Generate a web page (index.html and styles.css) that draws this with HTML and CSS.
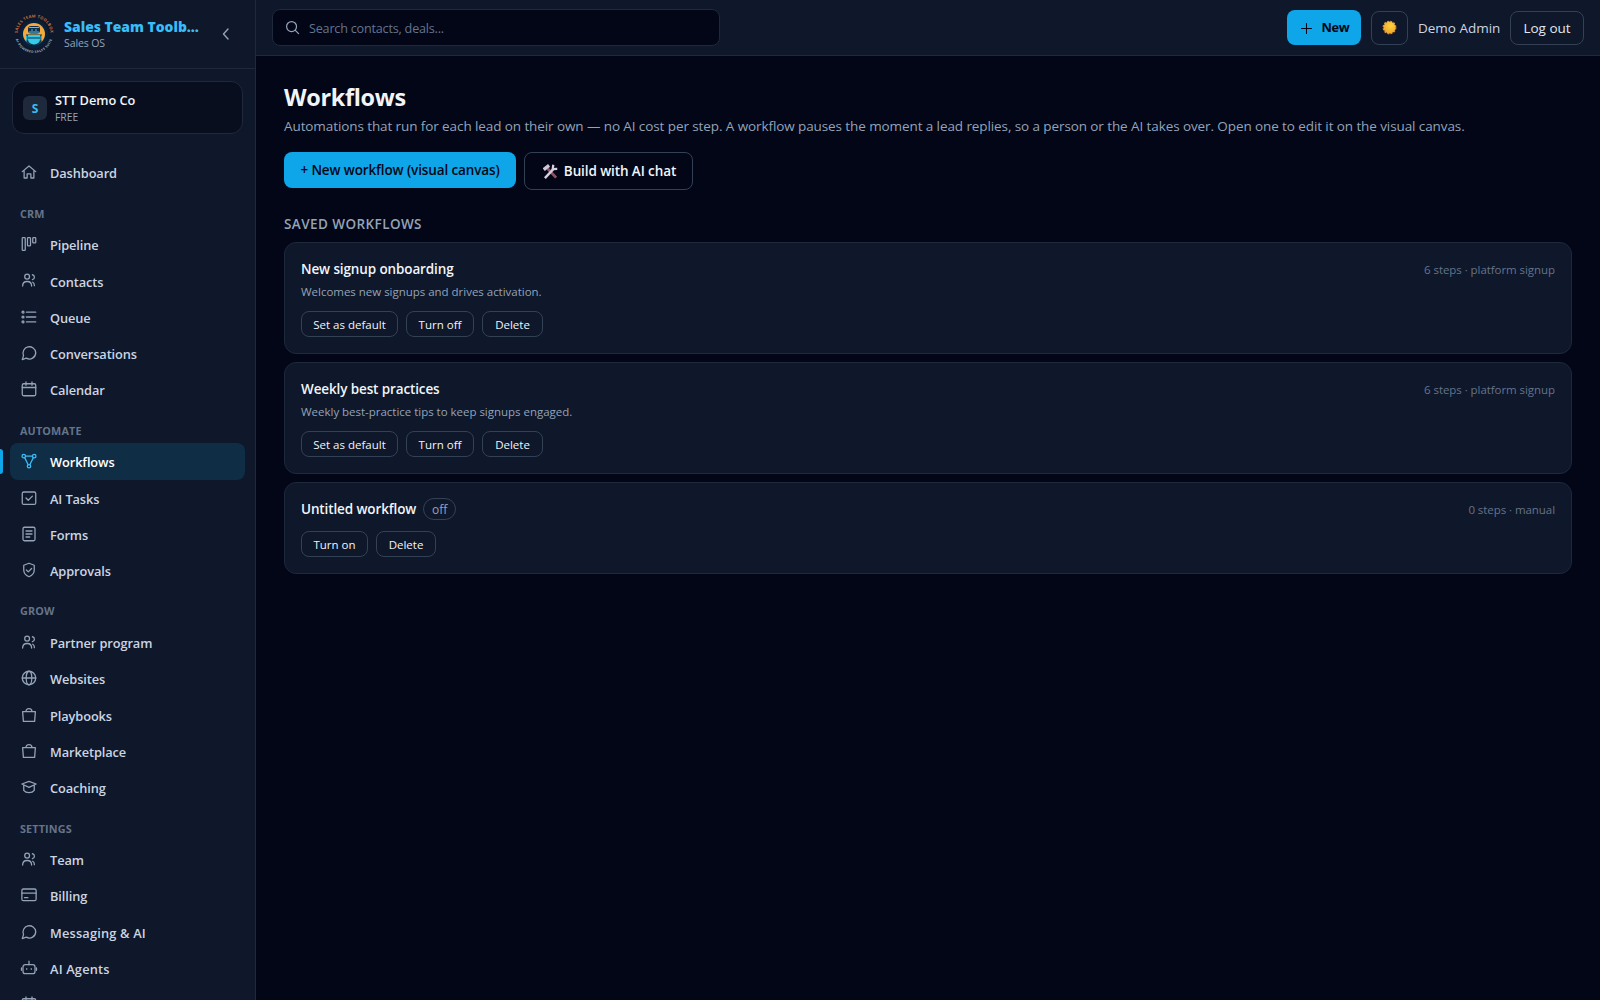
FILE: index.html
```html
<!DOCTYPE html>
<html lang="en">
<head>
	<meta charset="utf-8">
	<title>Workflows - Sales Team Toolbox</title>
	<link rel="stylesheet" href="styles.css">
</head>
<body>
	<!-- shared icons -->
	<svg class="defs" width="0" height="0">
		<symbol id="i-home" viewBox="0 0 24 24"><path d="M3 11.5 12 4l9 7.5M5.5 10v10h4v-5.5h5V20h4V10"/></symbol>
		<symbol id="i-pipe" viewBox="0 0 24 24"><rect x="3" y="3.5" width="4" height="17" rx="1"/><rect x="10" y="3.5" width="4" height="11" rx="1"/><rect x="17" y="3.5" width="4" height="7" rx="1"/></symbol>
		<symbol id="i-users" viewBox="0 0 24 24"><circle cx="9.5" cy="7.5" r="3.2"/><path d="M3.5 20c0-3.6 2.4-6 6-6s6 2.4 6 6M16.5 5a3.3 3.3 0 0 1 0 6.5M17 15c1.5.8 2.2 2.6 2.2 4.5"/></symbol>
		<symbol id="i-list" viewBox="0 0 24 24"><path d="M8.5 5.5H21M8.5 12H21M8.5 18.5H21"/><circle cx="4" cy="5.5" r="1.3"/><circle cx="4" cy="12" r="1.3"/><circle cx="4" cy="18.5" r="1.3"/></symbol>
		<symbol id="i-chat" viewBox="0 0 24 24"><path d="M21 11.5a8.5 8.5 0 0 1-12.6 7.4L3 20.8l1.7-5.3A8.5 8.5 0 1 1 21 11.5z"/></symbol>
		<symbol id="i-cal" viewBox="0 0 24 24"><rect x="3" y="5" width="18" height="16" rx="2"/><path d="M3 10h18M8 2.5V7M16 2.5V7"/></symbol>
		<symbol id="i-flow" viewBox="0 0 24 24"><circle cx="5" cy="5.5" r="2.3"/><circle cx="19" cy="5.5" r="2.3"/><circle cx="12" cy="19" r="2.3"/><path d="M7.3 5.5h9.4M6.2 7.5l4.7 9.4M17.8 7.5l-4.7 9.4"/></symbol>
		<symbol id="i-check" viewBox="0 0 24 24"><rect x="3" y="4" width="18" height="16.5" rx="2"/><path d="M8 12l3 3 5.5-5.5"/></symbol>
		<symbol id="i-form" viewBox="0 0 24 24"><rect x="4" y="3" width="16" height="18" rx="2"/><path d="M8 8h8M8 12h8M8 16h5"/></symbol>
		<symbol id="i-shield" viewBox="0 0 24 24"><path d="M12 3l7 2.7V12c0 4.3-2.8 7.4-7 9-4.2-1.6-7-4.7-7-9V5.7z"/><path d="M8.5 12l2.5 2.5 4.5-4.5"/></symbol>
		<symbol id="i-globe" viewBox="0 0 24 24"><circle cx="12" cy="12" r="9"/><ellipse cx="12" cy="12" rx="3.7" ry="9"/><path d="M3 12h18"/></symbol>
		<symbol id="i-bag" viewBox="0 0 24 24"><path d="M3.5 7.5h17l-1 13h-15zM8 7.5C8 5 9.5 3.5 12 3.5S16 5 16 7.5"/></symbol>
		<symbol id="i-cap" viewBox="0 0 24 24"><path d="M2.5 8 12 4.5 21.5 8 12 12.5zM5 9.5v7c1.5 2 4 3 7 3s5.5-1 7-3v-7"/></symbol>
		<symbol id="i-card" viewBox="0 0 24 24"><rect x="2.5" y="4" width="19" height="15.5" rx="2"/><path d="M2.5 9.5h19M6 15.5h4.5"/></symbol>
		<symbol id="i-bot" viewBox="0 0 24 24"><rect x="4" y="7.5" width="16" height="12" rx="3"/><path d="M12 3v4.5M2 12v3M22 12v3M9 13v.8M15 13v.8"/></symbol>
	</svg>

	<div class="app">
		<aside class="sidebar">
			<div class="brand">
				<svg class="logo" viewBox="0 0 40 40">
					<defs>
						<path id="arcTop" d="M3.5 20A16.5 16.5 0 0 1 36.5 20"/>
						<path id="arcBottom" d="M1 20A19 19 0 0 0 39 20"/>
					</defs>
					<circle cx="20" cy="20" r="14.5" fill="#06203c"/>
					<circle cx="20" cy="20" r="11" fill="#f5a83c"/>
					<rect x="14" y="12" width="12" height="7.5" rx="3" fill="#0b2f4d"/>
					<path d="M15.5 13.5h9M15.5 18h9" stroke="#5cc3dc" stroke-width="1.2"/>
					<path d="M17.5 16h1M21.5 16h1" stroke="#5cc3dc"/>
					<path d="M12 20.5h16v5a8 6 0 0 1-16 0z" fill="#0b2f4d"/>
					<path d="M14 21h12v2.5H14zM14 24.5h12v1a6 5 0 0 1-12 0z" fill="#35cbe8"/>
					<path d="M12.8 22v4M27.2 22v4" stroke="#35cbe8" stroke-width="1.3"/>
					<text class="ring top"><textPath href="#arcTop" startOffset="50%">SALES TEAM TOOLBOX</textPath></text>
					<text class="ring bottom"><textPath href="#arcBottom" startOffset="50%">AI-POWERED SALES SUITE</textPath></text>
				</svg>
				<div class="brand-text">
					<div class="brand-name">Sales Team Toolb…</div>
					<div class="brand-sub">Sales OS</div>
				</div>
				<svg class="collapse" viewBox="0 0 18 18"><path d="M11 4 6.5 9 11 14"/></svg>
			</div>

			<div class="tenant">
				<div class="tenant-icon">S</div>
				<div>
					<div class="tenant-name">STT Demo Co</div>
					<div class="tenant-plan">FREE</div>
				</div>
			</div>

			<nav class="nav">
				<a class="item"><svg><use href="#i-home"/></svg>Dashboard</a>
				<div class="group">CRM</div>
				<a class="item"><svg><use href="#i-pipe"/></svg>Pipeline</a>
				<a class="item"><svg><use href="#i-users"/></svg>Contacts</a>
				<a class="item"><svg><use href="#i-list"/></svg>Queue</a>
				<a class="item"><svg><use href="#i-chat"/></svg>Conversations</a>
				<a class="item"><svg><use href="#i-cal"/></svg>Calendar</a>
				<div class="group">AUTOMATE</div>
				<a class="item active"><svg><use href="#i-flow"/></svg>Workflows</a>
				<a class="item"><svg><use href="#i-check"/></svg>AI Tasks</a>
				<a class="item"><svg><use href="#i-form"/></svg>Forms</a>
				<a class="item"><svg><use href="#i-shield"/></svg>Approvals</a>
				<div class="group">GROW</div>
				<a class="item"><svg><use href="#i-users"/></svg>Partner program</a>
				<a class="item"><svg><use href="#i-globe"/></svg>Websites</a>
				<a class="item"><svg><use href="#i-bag"/></svg>Playbooks</a>
				<a class="item"><svg><use href="#i-bag"/></svg>Marketplace</a>
				<a class="item"><svg><use href="#i-cap"/></svg>Coaching</a>
				<div class="group">SETTINGS</div>
				<a class="item"><svg><use href="#i-users"/></svg>Team</a>
				<a class="item"><svg><use href="#i-card"/></svg>Billing</a>
				<a class="item wide"><svg><use href="#i-chat"/></svg>Messaging &amp; AI</a>
				<a class="item wide"><svg><use href="#i-bot"/></svg>AI Agents</a>
				<a class="item"><svg><use href="#i-cal"/></svg></a>
			</nav>
		</aside>

		<div class="main">
			<header class="topbar">
				<div class="search">
					<svg viewBox="0 0 16 16"><circle cx="7" cy="7" r="5.3"/><path d="M11 11l3.5 3.5"/></svg>
					<span>Search contacts, deals...</span>
				</div>
				<div class="actions">
					<button class="new"><svg viewBox="0 0 12 12"><path d="M6 .5v11M.5 6h11"/></svg>New</button>
					<button class="theme">
						<svg viewBox="0 0 16 16">
							<defs>
								<radialGradient id="sun" cx=".6" cy=".35" r=".7"><stop offset="0" stop-color="#ffd23c"/><stop offset="1" stop-color="#f0a32a"/></radialGradient>
							</defs>
							<circle cx="8" cy="8" r="6.7" fill="none" stroke="#e8873a" stroke-width="1.3" stroke-dasharray="2.2 1.3"/>
							<circle cx="8" cy="8" r="6.4" fill="url(#sun)"/>
						</svg>
					</button>
					<span class="user">Demo Admin</span>
					<button class="logout">Log out</button>
				</div>
			</header>

			<main class="content">
				<h1>Workflows</h1>
				<p class="lead">Automations that run for each lead on their own — no AI cost per step. A workflow pauses the moment a lead replies, so a person or the AI takes over. Open one to edit it on the visual canvas.</p>
				<div class="cta">
					<button class="primary">+ New workflow (visual canvas)</button>
					<button class="secondary">
						<svg viewBox="0 0 16 16">
							<path d="M5 5 14 14.5" stroke="#8d5560" stroke-width="3"/>
							<path d="M.8 6 6.5 1.5" stroke="#cfc6dc" stroke-width="3.6"/>
							<path d="M2 15 11.5 5" stroke="#d8cfe2" stroke-width="2.6"/>
							<path d="M11 .8 10.3 5.5 15.2 5.3" stroke="#d8cfe2" stroke-width="2.4"/>
						</svg>
						Build with AI chat
					</button>
				</div>

				<h2>SAVED WORKFLOWS</h2>
				<div class="cards">
					<div class="card">
						<div class="card-head">
							<span class="title">New signup onboarding</span>
							<span class="meta">6 steps · platform signup</span>
						</div>
						<div class="desc">Welcomes new signups and drives activation.</div>
						<div class="buttons"><button class="w1">Set as default</button><button class="w2">Turn off</button><button class="w3">Delete</button></div>
					</div>
					<div class="card">
						<div class="card-head">
							<span class="title">Weekly best practices</span>
							<span class="meta">6 steps · platform signup</span>
						</div>
						<div class="desc">Weekly best-practice tips to keep signups engaged.</div>
						<div class="buttons"><button class="w1">Set as default</button><button class="w2">Turn off</button><button class="w3">Delete</button></div>
					</div>
					<div class="card">
						<div class="card-head tall">
							<span class="title">Untitled workflow</span>
							<span class="badge">off</span>
							<span class="meta">0 steps · manual</span>
						</div>
						<div class="buttons"><button class="w4">Turn on</button><button class="w5">Delete</button></div>
					</div>
				</div>
			</main>
		</div>
	</div>
</body>
</html>
```
FILE: styles.css
```css
* {
	box-sizing: border-box;
}
body {
	margin: 0;
	background: #020617;
	color: #f1f5f9;
	font-family: "Open Sans", "Noto Sans", sans-serif;
	font-size: 13.5px;
	line-height: 1.5;
}
button {
	font: inherit;
	color: inherit;
	background: none;
	border: 1px solid #334155;
	border-radius: 8px;
	padding: 0;
	white-space: nowrap;
}
svg {
	fill: none;
	stroke: currentColor;
	stroke-linecap: round;
	stroke-linejoin: round;
	flex: none;
}
.defs {
	position: absolute;
}
.app {
	display: flex;
	height: 1000px;
	overflow: hidden;
}

/* sidebar */
.sidebar {
	width: 256px;
	flex: none;
	background: #0f172a;
	border-right: 1px solid #1e293b;
}
.brand {
	display: flex;
	align-items: center;
	height: 69px;
	padding: 0 20px 0 14px;
	border-bottom: 1px solid #1e293b;
}
.logo {
	width: 40px;
	height: 40px;
	stroke: none;
}
.ring {
	font-size: 4px;
	font-weight: 700;
	text-anchor: middle;
}
.ring.top {
	fill: #c9713f;
	letter-spacing: 0.3px;
}
.ring.bottom {
	fill: #8fb0c8;
	font-size: 3.3px;
	letter-spacing: 0.35px;
}
.brand-text {
	flex: 1;
	margin-left: 10px;
	padding-top: 1px;
}
.brand-name {
	color: #38bdf8;
	font-size: 13.9px;
	font-weight: 800;
	line-height: 16px;
}
.brand-sub {
	color: #94a3b8;
	font-size: 10.5px;
	line-height: 16px;
	letter-spacing: -0.1px;
}
.collapse {
	width: 18px;
	height: 18px;
	color: #94a3b8;
	stroke-width: 1.4;
}
.tenant {
	display: flex;
	align-items: center;
	gap: 8px;
	height: 53px;
	margin: 12px 12px 20.3px;
	padding: 0 10px;
	background: #090e1f;
	border: 1px solid #1e293b;
	border-radius: 12px;
}
.tenant-icon {
	width: 24px;
	height: 24px;
	border-radius: 6px;
	background: #1e293b;
	color: #38bdf8;
	font-size: 12px;
	font-weight: 700;
	line-height: 25px;
	text-align: center;
}
.tenant-name {
	padding-top: 1px;
	font-size: 12.8px;
	font-weight: 600;
	line-height: 17px;
	letter-spacing: -0.05px;
}
.tenant-plan {
	color: #94a3b8;
	font-size: 10.3px;
	line-height: 16px;
}
.nav {
	padding: 0 10px;
}
.item {
	position: relative;
	display: flex;
	align-items: center;
	gap: 12px;
	height: 36.3px;
	padding: 3px 10px 0;
	border-radius: 8px;
	color: #cbd5e1;
	font-size: 12.8px;
	font-weight: 600;
	letter-spacing: -0.1px;
}
.item.wide {
	letter-spacing: 0.18px;
}
.item svg {
	width: 18px;
	height: 18px;
	margin-bottom: 3.4px;
	color: #94a3b8;
	stroke-width: 1.7;
}
.item.active {
	background: #0f2d45;
	color: #fff;
}
.item.active svg {
	color: #38bdf8;
}
.item.active::before {
	content: "";
	position: absolute;
	left: -10px;
	top: 6px;
	bottom: 6px;
	width: 3px;
	border-radius: 0 3px 3px 0;
	background: #0ea5e9;
}
.group {
	height: 35.6px;
	padding: 15px 10px 0;
	color: #64748b;
	font-size: 10.8px;
	font-weight: 700;
	line-height: 15px;
	letter-spacing: 0.15px;
}

/* top bar */
.main {
	flex: 1;
	min-width: 0;
}
.topbar {
	display: flex;
	align-items: center;
	justify-content: space-between;
	height: 56px;
	padding: 0 16px;
	background: #0f172a;
	border-bottom: 1px solid #1e293b;
}
.search {
	display: flex;
	align-items: center;
	gap: 9px;
	width: 448px;
	height: 37px;
	padding: 0 12px;
	background: #020617;
	border: 1px solid #1e293b;
	border-radius: 8px;
	color: #64748b;
	font-size: 12.6px;
	letter-spacing: -0.2px;
}
.search span {
	padding-top: 3px;
}
.search svg {
	width: 15px;
	height: 15px;
	color: #94a3b8;
	stroke-width: 1.3;
}
.actions {
	display: flex;
	align-items: center;
	gap: 10px;
}
.actions button {
	height: 34px;
}
.actions .new {
	display: flex;
	align-items: center;
	justify-content: center;
	gap: 9px;
	width: 74px;
	height: 35px;
	padding: 1px 0 0 3px;
	border: 0;
	background: #0ea5e9;
	color: #020617;
	font-size: 12.8px;
	font-weight: 700;
	letter-spacing: -0.3px;
}
.new svg {
	width: 11px;
	height: 11px;
	stroke-width: 1.1;
}
.theme {
	display: flex;
	align-items: center;
	justify-content: center;
	width: 37px;
}
.theme svg {
	width: 15px;
	height: 15px;
}
.theme circle {
	stroke-linecap: butt;
}
.theme circle:last-child {
	stroke: none;
}
.user {
	width: 82px;
	padding-top: 1px;
	color: #cbd5e1;
	letter-spacing: -0.02px;
	white-space: nowrap;
}
.actions .logout {
	width: 74px;
	padding-top: 1px;
	color: #e2e8f0;
}

/* page */
.content {
	padding: 23px 28px;
}
h1 {
	margin: 0;
	font-size: 23.4px;
	font-weight: 700;
	line-height: 36px;
	letter-spacing: -0.3px;
}
.lead {
	margin: 1px 0 0;
	color: #94a3b8;
	line-height: 21px;
	letter-spacing: -0.095px;
	white-space: nowrap;
}
.cta {
	display: flex;
	align-items: flex-start;
	gap: 8px;
	margin-top: 15px;
}
.primary {
	width: 232px;
	height: 36px;
	padding-top: 1px;
	border: 0;
	background: #0ea5e9;
	color: #020617;
	font-size: 13.5px;
	font-weight: 550;
	letter-spacing: -0.12px;
}
.secondary {
	display: flex;
	align-items: center;
	justify-content: center;
	gap: 6px;
	width: 169px;
	height: 38px;
	padding: 1px 0 0 2px;
	font-weight: 600;
	letter-spacing: -0.1px;
}
.secondary svg {
	width: 15px;
	height: 15px;
	stroke-linecap: butt;
}
h2 {
	margin: 24px 0 7px;
	color: #94a3b8;
	font-size: 13.5px;
	font-weight: 600;
	line-height: 21px;
	letter-spacing: 0.42px;
}
.cards {
	display: flex;
	flex-direction: column;
	gap: 8px;
}
.card {
	padding: 16px;
	background: #0f172a;
	border: 1px solid #1e293b;
	border-radius: 12px;
}
.card-head {
	display: flex;
	align-items: center;
	gap: 8px;
	height: 21px;
}
.card-head.tall {
	height: 22px;
	padding-bottom: 1px;
}
.title {
	font-weight: 620;
	letter-spacing: -0.12px;
}
.meta {
	margin-left: auto;
	color: #64748b;
	font-size: 11.5px;
	letter-spacing: -0.06px;
}
.badge {
	width: 33px;
	height: 22px;
	margin: -1px 0 0 -1px;
	border: 1px solid #334155;
	border-radius: 11px;
	color: #94a3b8;
	font-size: 12px;
	line-height: 21px;
	text-align: center;
}
.desc {
	margin-top: 3px;
	color: #94a3b8;
	font-size: 11.5px;
	line-height: 18px;
	letter-spacing: -0.02px;
}
.buttons {
	display: flex;
	gap: 8px;
	margin-top: 10px;
}
.buttons button {
	height: 26px;
	padding-top: 1px;
	font-size: 11.5px;
	line-height: 23px;
}
.w1 {
	width: 97px;
}
.w2 {
	width: 68px;
}
.w3 {
	width: 61px;
}
.w4 {
	width: 67px;
}
.w5 {
	width: 60px;
}
```
